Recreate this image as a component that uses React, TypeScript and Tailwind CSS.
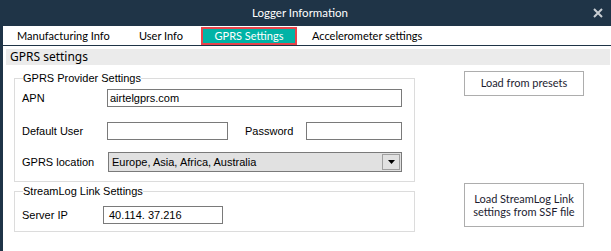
import React from 'react';

const ui = { fontFamily: 'Lato, "Noto Sans", sans-serif' };
const hd = { fontFamily: '"Noto Sans", "Open Sans", sans-serif' };
const ms = { fontFamily: '"Liberation Sans", Arial, sans-serif' };

const tabs = [
  { label: 'Manufacturing Info', cls: 'w-[122px] pl-[14px]' },
  { label: 'User Info', cls: 'w-[76px] pl-[14px]' },
  { label: 'GPRS Settings', cls: 'w-[96px]', active: true },
  { label: 'Accelerometer settings', cls: 'pl-[15px]' },
];

const TextBox: React.FC<{ value?: string; className: string; pad?: string }> = ({
  value,
  className,
  pad = 'pl-[2px]',
}) => (
  <div
    className={`h-[18px] border border-[#7a7a7a] bg-white ${pad} text-[11px] leading-[16px] text-black whitespace-nowrap ${className}`}
    style={ms}
  >
    {value}
  </div>
);

const GroupBox: React.FC<{ title: string; className?: string; children: React.ReactNode }> = ({
  title,
  className,
  children,
}) => (
  <fieldset className={`border border-[#dcdcdc] px-[7px] ${className || ''}`}>
    <legend className="ml-[1px] px-0 text-[11px] leading-[13px] text-black" style={ms}>
      {title}
    </legend>
    {children}
  </fieldset>
);

export default function App() {
  return (
    <div className="w-[611px] h-[251px] bg-white flex flex-col overflow-hidden select-none whitespace-nowrap">
      {/* title bar */}
      <div className="h-[26px] bg-[#1f3447] relative flex items-center justify-center">
        <span className="ml-[-11px] text-[11.5px] text-white" style={ui}>
          Logger Information
        </span>
        <svg className="absolute right-[8px] top-[8px]" width="10" height="10" viewBox="0 0 10 10">
          <path d="M1 1 L9 9 M9 1 L1 9" stroke="#c9ced3" strokeWidth="2" />
        </svg>
      </div>

      <div className="flex flex-1">
        <div className="w-[3px] bg-[#1f3447]" />
        <div className="flex-1 flex flex-col">
          {/* tabs */}
          <div className="h-[20px] flex border-b border-[#1f3447]">
            {tabs.map((t) =>
              t.active ? (
                <div
                  key={t.label}
                  className={`${t.cls} mt-[1px] flex items-center justify-center border-2 border-[#e8434b] bg-[#00b3a6] text-[11px] text-white`}
                  style={ui}
                >
                  {t.label}
                </div>
              ) : (
                <div
                  key={t.label}
                  className={`${t.cls} flex items-center pt-[1px] text-[11px] text-black`}
                  style={ui}
                >
                  {t.label}
                </div>
              )
            )}
          </div>

          {/* section header */}
          <div
            className="mt-[3px] ml-[3px] mr-[1px] h-[16px] bg-[#ebebeb] pl-[4px] text-[12px] leading-[16px] text-black"
            style={hd}
          >
            GPRS settings
          </div>

          <div className="flex pl-[11px] pt-[7px]">
            <div className="w-[401px] flex flex-col gap-[3px]">
              <GroupBox title="GPRS Provider Settings" className="pb-[9px]">
                <div className="flex items-center mt-[4px]" style={ms}>
                  <span className="w-[85px] text-[11px] text-black">APN</span>
                  <TextBox value="airtelgprs.com" className="w-[295px]" />
                </div>
                <div className="flex items-center mt-[15px]" style={ms}>
                  <span className="w-[85px] text-[11px] text-black">Default User</span>
                  <TextBox className="w-[121px]" />
                  <span className="ml-[17px] w-[61px] text-[11px] text-black">Password</span>
                  <TextBox className="w-[96px]" />
                </div>
                <div className="flex items-center mt-[12px]" style={ms}>
                  <span className="w-[86px] text-[11px] text-black">GPRS location</span>
                  <div className="w-[294px] h-[20px] border border-[#7a7a7a] bg-[#e1e1e1] flex">
                    <span className="flex-1 pl-[3px] text-[11px] leading-[18px] text-black">
                      Europe, Asia, Africa, Australia
                    </span>
                    <div className="w-[18px] m-[1px] border border-[#a0a0a0] bg-[#e1e1e1] flex items-center justify-center">
                      <svg width="7" height="4" viewBox="0 0 7 4">
                        <path d="M0 0 H7 L3.5 4 Z" fill="#000" />
                      </svg>
                    </div>
                  </div>
                </div>
              </GroupBox>

              <GroupBox title="StreamLog Link Settings" className="pb-[7px]">
                <div className="flex items-center mt-[8px]" style={ms}>
                  <span className="w-[81px] text-[11px] text-black">Server IP</span>
                  <TextBox value="40.114. 37.216" className="w-[120px]" pad="pl-[5px]" />
                </div>
              </GroupBox>
            </div>

            <div className="ml-[49px] flex flex-col">
              <button
                className="mt-[-1px] w-[120px] h-[25px] border border-[#adadad] bg-white text-[11px] text-[#1c1c30]"
                style={ui}
              >
                Load from presets
              </button>
              <button
                className="mt-[87px] w-[120px] h-[44px] border border-[#adadad] bg-white text-[11px] leading-[13px] text-[#1c1c30]"
                style={ui}
              >
                Load StreamLog Link
                <br />
                settings from SSF file
              </button>
            </div>
          </div>
        </div>
      </div>
    </div>
  );
}
